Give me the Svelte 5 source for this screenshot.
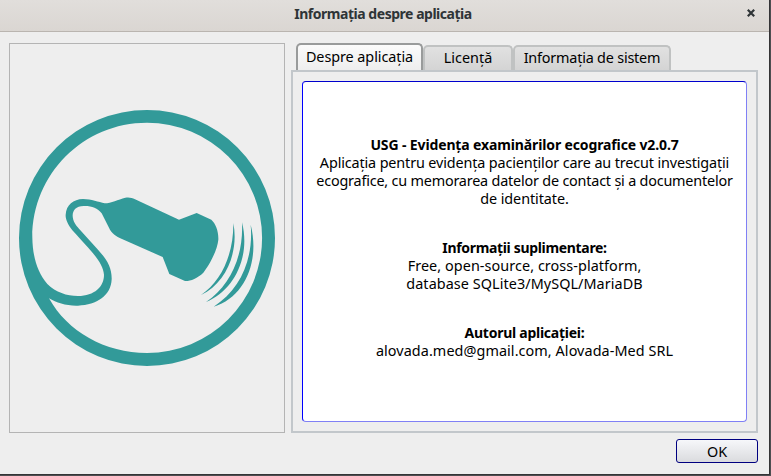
<script>
  let active = $state(0);
  const tabs = ['Despre aplicația', 'Licență', 'Informația de sistem'];
</script>

<div class="screen">
  <div class="window">
    <header>
      <h1>Informația despre aplicația</h1>
      <button class="close" aria-label="Închide">
        <svg width="8" height="8" viewBox="0 0 8 8"><path d="M.8.8 7.2 7.2M7.2.8.8 7.2" stroke="#2e3436" stroke-width="2.2" fill="none" /></svg>
      </button>
    </header>
    <main>
      <div class="picture">
        <svg width="256" height="256" viewBox="57 60 768 768" fill="#329a99">
          <path fill-rule="evenodd" d="M441 60a384 384 0 1 1 0 768a384 384 0 1 1 0-768zM441 98.500C250 98.500 97 252 97 443C98 500 112 547 142 582C168 607 200 618 234 618C284 617 312 590 312 554C309 516 273 483 217 421C202 401 196 386 197 374C199 344 220 328 249 327C274 327 296 336 314 340C334 339 354 329 376 323C387 321 396 323 405 328L537 389L590 369L634 389C648 402 656 425 655 449C652 482 626 528 610 548C592 565 570 574 555 573L508 552L488 501L366 447C348 439 334 429 327 413L305 370C292 354 274 347 251 348C228 349 218 360 218 378C219 394 227 405 237 416L294 479C319 507 336 531 335 568C333 617 291 645 234 647C199 648 170 639 147 625C202 725 315 789 441 789A345 345 0 0 0 441 98.500z" />
          <path d="M700 399C716 480 683 577 603 615C666 572 701 490 700 399z" />
          <path d="M726 397C752 500 703 601 618 636C690 588 731 499 726 397z" />
          <path d="M752 404C780 512 735 622 641 650C721 599 761 508 752 404z" />
        </svg>
      </div>
      <div class="side">
        <nav>
          {#each tabs as tab, i}
            <button class="tab t{i}" class:active={active === i} onclick={() => (active = i)}><span>{tab}</span></button>
          {/each}
        </nav>
        <div class="pane">
          <div class="text">
            <p class="l1"><b>USG - Evidența examinărilor ecografice v2.0.7</b></p>
            <p class="l2">Aplicația pentru evidența pacienților care au trecut investigații</p>
            <p class="l3">ecografice, cu memorarea datelor de contact și a documentelor</p>
            <p class="l4">de identitate.</p>
            <p class="gap l5"><b>Informații suplimentare:</b></p>
            <p>Free, open-source, cross-platform,</p>
            <p>database SQLite3/MySQL/MariaDB</p>
            <p class="gap l8"><b>Autorul aplicației:</b></p>
            <p>alovada.med@gmail.com, Alovada-Med SRL</p>
          </div>
        </div>
      </div>
    </main>
    <footer><button class="ok">OK</button></footer>
  </div>
</div>

<style>
  :global(body) { overflow: hidden; }
  .screen { width: 771px; height: 476px; background: #555557; font: 14.4px/18px "Noto Sans", sans-serif; color: #000; }
  .screen, .screen * { box-sizing: border-box; }
  button { font: inherit; color: inherit; padding: 0; margin: 0; }
  .window { width: 769px; height: 474px; background: #eee; display: flex; flex-direction: column; box-shadow: 0 0 1px 1px #343436; }
  header { height: 32px; flex: none; display: grid; grid-template-columns: 40px 1fr 40px; align-items: center; background: linear-gradient(#e1dedb, #dad6d2); border-bottom: 1px solid #bab5b0; }
  h1 { grid-column: 2; margin: 0; padding: 0 3px 4px 0; text-align: center; font-size: 14px; line-height: 20px; font-weight: 700; color: #2e3436; letter-spacing: -0.47px; white-space: nowrap; }
  .close { border: 0; background: none; height: 8px; width: 8px; display: flex; margin: 0 0 5px 18px; }
  main { display: flex; flex: none; padding: 11px 0 0 9px; gap: 6px; }
  .picture { width: 276px; height: 390px; border: 1px solid #b4b4b4; display: flex; align-items: center; justify-content: center; }
  .picture svg { display: block; }
  .side { width: 467px; height: 390px; display: flex; flex-direction: column; }
  nav { height: 27px; display: flex; align-items: flex-end; padding-left: 5px; }
  .tab { height: 25px; border: 2px solid #c0c2c2; border-bottom: 0; border-radius: 5px 5px 0 0; background: linear-gradient(#e1e1e1, #d4d4d4); white-space: nowrap; display: flex; align-items: center; justify-content: center; padding-bottom: 1px; }
  .tab.active { height: 27px; border-color: #999b9b; background: linear-gradient(#fbfbfb, #eee); }
  .t0 { width: 127px; letter-spacing: -0.06px; }
  .t1 { width: 90px; }
  .t2 { width: 158px; letter-spacing: -0.2px; }
  .pane { height: 363px; border: 2px solid #c2c7cb; padding: 9px; }
  .text { width: 445px; height: 341px; background: #fff; border: 1px solid #8080f5; border-top-color: #0000cd; border-left-color: #0000ff; border-radius: 4px; padding-top: 54px; text-align: center; white-space: nowrap; }
  p { margin: 0; height: 18px; letter-spacing: 0.07px; }
  b { font-size: 14px; }
  .l1 { letter-spacing: -0.13px; }
  .l2 { letter-spacing: -0.14px; }
  .l3 { letter-spacing: -0.2px; }
  .l4 { letter-spacing: -0.08px; }
  .l5 { letter-spacing: -0.33px; }
  .l8 { letter-spacing: -0.26px; }
  .gap { margin-top: 31px; }
  footer { display: flex; justify-content: flex-end; padding: 6px 11px 0 0; }
  .ok { width: 82px; height: 24px; border: 1px solid #000080; border-radius: 3px; background: linear-gradient(#f6f7fa, #dadbde); padding-top: 1px; }
</style>
